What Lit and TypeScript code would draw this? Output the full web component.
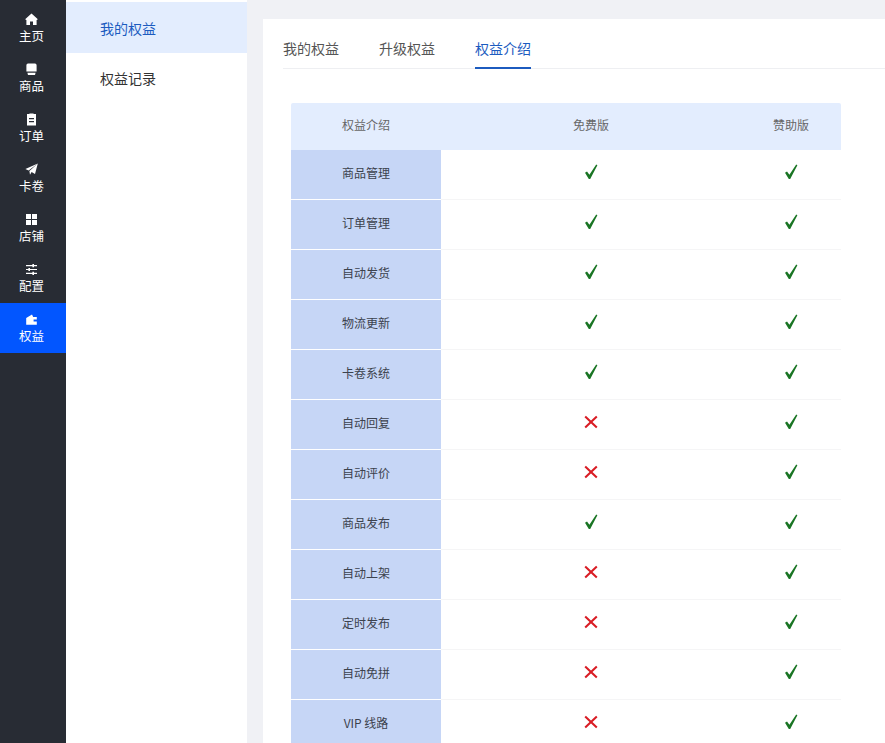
import { LitElement, html, css, svg } from "lit";
import { customElement } from "lit/decorators.js";

const icons: Record<string, unknown> = {
  home: svg`<path d="M6.5 .6 L12.6 6 Q12.8 7 11.6 7 V12 H8 V8.6 H5 V12 H1.4 V7 Q.2 7 .4 6 Z"/>`,
  goods: svg`<path d="M3 .6 H10 Q11.6 .6 11.6 2.2 V8.4 H1.4 V2.2 Q1.4 .6 3 .6 Z M2.4 9.8 H10.6 L10 12 H3 Z"/>`,
  order: svg`<path fill-rule="evenodd" d="M4.4 1 V.4 H8.6 V1 H11 V12.6 H2 V1 Z M4 5 V6.2 H9 V5 Z M4 8 V9.2 H9 V8 Z"/>`,
  send: svg`<path d="M12.8 .4 L10 11 L6.6 9 L5 11.8 L4.4 8 Z M12.8 .4 L.4 6 L3.6 7.6 Z"/>`,
  shop: svg`<path d="M1 1 H6 V6 H1 Z M7 1 H12 V6 H7 Z M1 7 H6 V12 H1 Z M7 7 H12 V12 H7 Z"/>`,
  config: svg`<path d="M1 2 H7.4 V1 H9 V2 H12 V3.2 H9 V4.2 H7.4 V3.2 H1 Z M1 5.9 H3.4 V4.9 H5 V5.9 H12 V7.1 H5 V8.1 H3.4 V7.1 H1 Z M1 9.8 H7.4 V8.8 H9 V9.8 H12 V11 H9 V12 H7.4 V11 H1 Z"/>`,
  rights: svg`<path d="M1.2 5 L7 1.4 L8.2 4 H11.8 V6.4 H8.6 V8.4 H11.8 V11.8 H1.2 Z"/>`,
};

const nav = [
  ["home", "主页"],
  ["goods", "商品"],
  ["order", "订单"],
  ["send", "卡卷"],
  ["shop", "店铺"],
  ["config", "配置"],
  ["rights", "权益"],
];

const rows: [string, boolean][] = [
  ["商品管理", true],
  ["订单管理", true],
  ["自动发货", true],
  ["物流更新", true],
  ["卡卷系统", true],
  ["自动回复", false],
  ["自动评价", false],
  ["商品发布", true],
  ["自动上架", false],
  ["定时发布", false],
  ["自动免拼", false],
  ["VIP 线路", false],
];

const check = html`<svg class="mark" viewBox="0 0 16 16" width="16" height="16"><path d="M2 8.8 L4 7.6 L6.4 10.8 L13.2 .6 L14.4 1.2 L7.2 15 L5.8 15 Z" fill="#1a7524"/></svg>`;
const cross = html`<svg class="mark" viewBox="0 0 16 16" width="16" height="16"><path d="M2.2 2.6 L13.8 13.4 M13.8 2.6 L2.2 13.4" fill="none" stroke="#d91c24" stroke-width="2.1"/></svg>`;

@customElement("app-root")
export class AppRoot extends LitElement {
  static styles = css`
    :host {
      display: flex;
      height: 100vh;
      overflow: hidden;
      font-family: "Noto Sans CJK SC", "Liberation Sans", sans-serif;
      background: #f0f1f5;
    }
    .side {
      width: 66px;
      flex: none;
      background: #282c34;
      padding-top: 3px;
    }
    .nav {
      height: 50px;
      display: flex;
      flex-direction: column;
      align-items: center;
      padding: 10px 3px 0 0;
      box-sizing: border-box;
      color: #fff;
      font-size: 12.5px;
      line-height: 16px;
    }
    .nav svg {
      fill: #fff;
      display: block;
      margin-bottom: 2px;
    }
    .nav.on {
      background: #0256ff;
    }
    .sub {
      width: 181px;
      flex: none;
      background: #fff;
      padding-top: 2px;
      color: #333;
    }
    .sub div {
      height: 51px;
      line-height: 52px;
      padding-left: 34px;
      font-size: 14px;
    }
    .sub div + div {
      line-height: 50px;
    }
    .sub .on {
      background: #e3edfe;
      color: #1c5bbf;
    }
    .main {
      flex: 1;
      min-width: 0;
      padding: 19px 0 0 16px;
    }
    .card {
      background: #fff;
      height: 100%;
      padding: 0 0 0 20px;
    }
    .tabs {
      display: flex;
      gap: 40px;
      height: 49px;
      border-bottom: 1px solid #eeeff2;
      font-size: 14px;
      color: #555;
    }
    .tab {
      height: 50px;
      line-height: 58px;
      box-sizing: border-box;
    }
    .tab.on {
      color: #1c5bbf;
      border-bottom: 2px solid #1c5bbf;
    }
    .table {
      margin: 34px 0 0 8px;
      width: 550px;
      font-size: 12px;
    }
    .row {
      display: grid;
      grid-template-columns: 150px 300px 100px;
      height: 50px;
    }
    .row > div {
      display: flex;
      align-items: center;
      justify-content: center;
      border-bottom: 1px solid #f5f5f6;
      padding-bottom: 5px;
      box-sizing: border-box;
    }
    .row > .label {
      background: #c6d6f6;
      color: #3c424d;
      border-bottom-color: #fff;
    }
    .head {
      height: 47px;
      background: #e3edfe;
      color: #666;
      border-radius: 2px 2px 0 0;
    }
    .head > div {
      border: 0;
      padding: 0 0 4px;
    }
    .mark {
      display: block;
    }
  `;

  render() {
    return html`
      <div class="side">
        ${nav.map(
          ([icon, label], i) => html`<div class="nav ${i === 6 ? "on" : ""}">
            <svg viewBox="0 0 13 13" width="13" height="13">${icons[icon]}</svg>${label}
          </div>`
        )}
      </div>
      <div class="sub">
        <div class="on">我的权益</div>
        <div>权益记录</div>
      </div>
      <div class="main">
        <div class="card">
          <div class="tabs">
            <div class="tab">我的权益</div>
            <div class="tab">升级权益</div>
            <div class="tab on">权益介绍</div>
          </div>
          <div class="table">
            <div class="row head">
              <div>权益介绍</div>
              <div>免费版</div>
              <div>赞助版</div>
            </div>
            ${rows.map(
              ([name, free]) => html`<div class="row">
                <div class="label">${name}</div>
                <div>${free ? check : cross}</div>
                <div>${check}</div>
              </div>`
            )}
          </div>
        </div>
      </div>
    `;
  }
}
